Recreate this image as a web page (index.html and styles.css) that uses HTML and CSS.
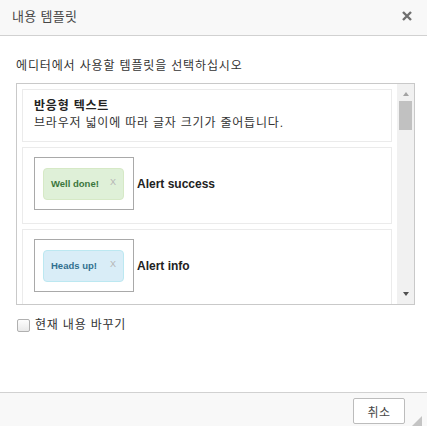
FILE: index.html
```html
<!DOCTYPE html>
<html lang="ko">
<head>
<meta charset="utf-8">
<title>내용 템플릿</title>
<link rel="stylesheet" href="styles.css">
</head>
<body>
<div class="dialog">
  <div class="dlg-header">
    <span class="dlg-title">내용 템플릿</span>
    <span class="dlg-close">
      <svg width="10" height="10" viewBox="0 0 10 10"><path d="M1 1 L9 9 M9 1 L1 9" stroke="#6f6f6f" stroke-width="2.4" stroke-linecap="butt"/></svg>
    </span>
  </div>
  <div class="dlg-body">
    <div class="desc">에디터에서 사용할 템플릿을 선택하십시오</div>
    <div class="listbox">
      <div class="items">
        <div class="item item-text">
          <div class="item-title">반응형 텍스트</div>
          <div class="item-sub">브라우저 넓이에 따라 글자 크기가 줄어듭니다.</div>
        </div>
        <div class="item item-alert">
          <div class="preview">
            <div class="alert alert-success"><span>Well done!</span><span class="x">X</span></div>
          </div>
          <span class="alert-label">Alert success</span>
        </div>
        <div class="item item-alert">
          <div class="preview">
            <div class="alert alert-info"><span>Heads up!</span><span class="x">X</span></div>
          </div>
          <span class="alert-label">Alert info</span>
        </div>
      </div>
      <div class="scrollbar">
        <span class="arrow-up"></span>
        <span class="thumb"></span>
        <span class="spacer"></span>
        <span class="arrow-down"></span>
      </div>
    </div>
    <label class="replace">
      <span class="checkbox"></span>
      <span class="replace-text">현재 내용 바꾸기</span>
    </label>
  </div>
  <div class="dlg-footer">
    <button class="btn">취소</button>
    <span class="grip"></span>
  </div>
</div>
</body>
</html>
```

FILE: styles.css
```css
html, body {
  margin: 0;
  padding: 0;
  background: #fff;
}
body {
  font-family: "Liberation Sans", "Noto Sans CJK KR", sans-serif;
  font-size: 12px;
  color: #333;
}
.dialog {
  width: 427px;
  height: 426px;
  display: flex;
  flex-direction: column;
  overflow: hidden;
}
.dlg-header {
  height: 35px;
  background: #f8f8f8;
  border-bottom: 1px solid #d1d1d1;
  display: flex;
  align-items: center;
  justify-content: space-between;
  padding: 0 15px 0 12px;
  box-sizing: content-box;
}
.dlg-title {
  font-size: 13px;
  color: #474747;
  line-height: 16px;
  margin-top: -2px;
  letter-spacing: 0.3px;
}
.dlg-close {
  display: flex;
  margin-top: -3px;
}
.dlg-body {
  flex: 1;
  padding: 22px 12px 0 16px;
}
.desc {
  line-height: 17px;
  height: 17px;
  color: #333;
  letter-spacing: 0.85px;
}
.listbox {
  margin-top: 8px;
  height: 220px;
  border: 1px solid #c9c9c9;
  display: flex;
  overflow: hidden;
}
.items {
  flex: 1;
  padding: 5px 5px 0 5px;
  display: flex;
  flex-direction: column;
  gap: 5px;
  overflow: hidden;
}
.item {
  border: 1px solid #ebebeb;
  flex-shrink: 0;
}
.item-text {
  padding: 8px 11px 9px;
  line-height: 17px;
  letter-spacing: 0.8px;
}
.item-title {
  font-weight: bold;
  color: #222;
}
.item-sub {
  color: #333;
}
.item-alert {
  height: 64px;
  padding: 9px 11px 2px;
  display: flex;
  align-items: flex-start;
}
.preview {
  border: 1px solid #a9a9a9;
  padding: 10px 8px 9px 8px;
  box-sizing: border-box;
  width: 100px;
  height: 53px;
}
.alert {
  height: 32px;
  box-sizing: border-box;
  border: 1px solid;
  border-radius: 4px;
  display: flex;
  align-items: center;
  justify-content: space-between;
  padding: 0 7px 1px 7px;
  font-weight: bold;
  font-size: 9.5px;
  width: 81px;
}
.alert .x {
  font-weight: normal;
  font-size: 9px;
  color: #b5b5b5;
  margin-top: -3px;
}
.alert-success {
  background: #dff0d8;
  border-color: #d6e9c6;
  color: #3c763d;
}
.alert-info {
  background: #d9edf7;
  border-color: #bce8f1;
  color: #31708f;
}
.alert-label {
  font-weight: bold;
  font-size: 12px;
  color: #222;
  margin-left: 3px;
  align-self: center;
  margin-top: -11px;
}
.scrollbar {
  width: 17px;
  background: #f1f1f1;
  display: flex;
  flex-direction: column;
  align-items: center;
}
.arrow-up {
  margin-top: 8px;
  width: 0;
  height: 0;
  border-left: 3.5px solid transparent;
  border-right: 3.5px solid transparent;
  border-bottom: 4px solid #a3a3a3;
}
.thumb {
  margin-top: 5px;
  width: 13px;
  height: 29px;
  background: #c1c1c1;
}
.spacer {
  flex: 1;
}
.arrow-down {
  margin-bottom: 8px;
  width: 0;
  height: 0;
  border-left: 3.5px solid transparent;
  border-right: 3.5px solid transparent;
  border-top: 4px solid #505050;
}
.replace {
  display: flex;
  align-items: center;
  margin-top: 12px;
  line-height: 17px;
}
.checkbox {
  width: 11px;
  height: 11px;
  border: 1px solid #b0b0b0;
  border-radius: 2px;
  background: linear-gradient(#fdfdfd, #e9e9e9);
  margin-left: 1px;
}
.replace-text {
  margin-left: 5px;
  color: #333;
  letter-spacing: 0.8px;
}
.dlg-footer {
  height: 34px;
  border-top: 1px solid #d1d1d1;
  background: #f8f8f8;
  display: flex;
  align-items: flex-start;
  justify-content: flex-end;
  padding: 5px 0 0 0;
  box-sizing: border-box;
  position: relative;
}
.btn {
  width: 52px;
  height: 26px;
  border: 1px solid #bcbcbc;
  border-radius: 2px;
  background: #fff;
  font-family: "Liberation Sans", "Noto Sans CJK KR", sans-serif;
  font-size: 12px;
  color: #474747;
  padding: 0;
  margin-right: 22px;
  letter-spacing: 0.5px;
}
.grip {
  position: absolute;
  right: 5px;
  bottom: 0;
  width: 0;
  height: 0;
  border-left: 10px solid transparent;
  border-bottom: 10px solid #c4c4c4;
}
```
